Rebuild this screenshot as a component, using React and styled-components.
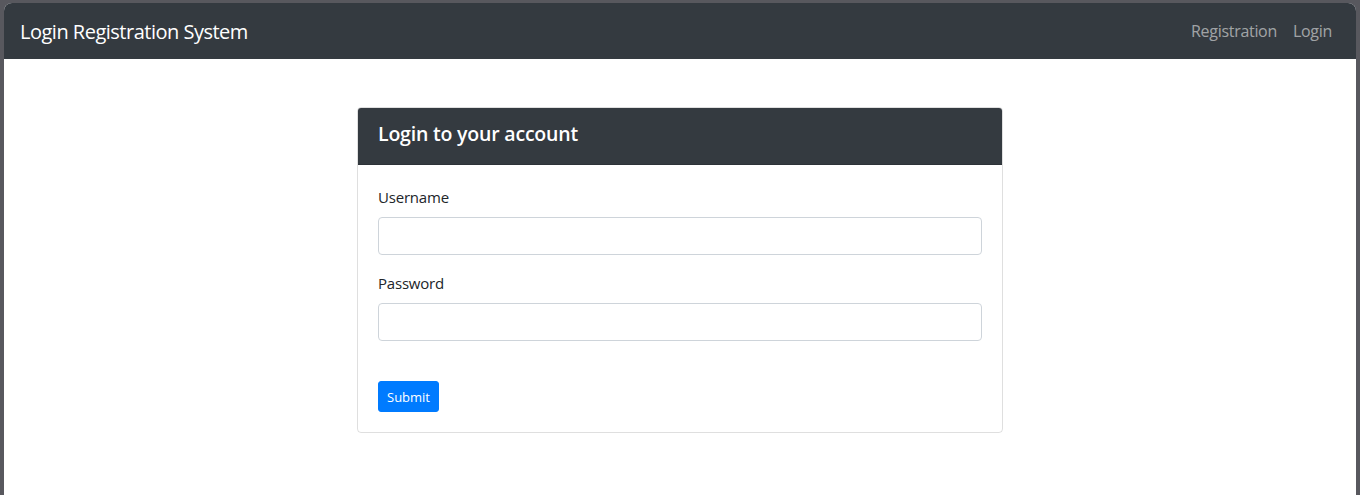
import React from 'react';
import styled, { createGlobalStyle } from 'styled-components';

const GlobalStyle = createGlobalStyle`
  html, body {
    margin: 0;
    padding: 0;
    height: 100%;
    background: #58585e;
    overflow: hidden;
  }
  #root {
    height: 100%;
  }
  * {
    box-sizing: border-box;
  }
`;

// Window frame around the page
const Frame = styled.div`
  height: 100%;
  padding: 3px 4px 0 4px;
`;

const Page = styled.div`
  height: 100%;
  background: #ffffff;
  border-radius: 8px 8px 0 0;
  overflow: hidden;
  font-family: 'Open Sans', 'Noto Sans', sans-serif;
  color: #212529;
`;

const Navbar = styled.nav`
  height: 56px;
  background-color: #343a40;
  display: flex;
  align-items: center;
  justify-content: space-between;
  padding: 0 16px;
`;

const Brand = styled.a`
  color: #ffffff;
  font-size: 20px;
  text-decoration: none;
  letter-spacing: -0.5px;
`;

const NavLinks = styled.div`
  display: flex;
`;

const NavLink = styled.a`
  color: rgba(255, 255, 255, 0.55);
  font-size: 16px;
  text-decoration: none;
  padding: 8px;
  letter-spacing: -0.3px;
`;

const Main = styled.main`
  display: flex;
  justify-content: center;
  padding-top: 48px;
`;

const Card = styled.div`
  width: 646px;
  border: 1px solid rgba(0, 0, 0, 0.125);
  border-radius: 4px;
  overflow: hidden;
`;

const CardHeader = styled.div`
  background-color: #343a40;
  color: #ffffff;
  height: 57px;
  padding: 0 20px 5px;
  display: flex;
  align-items: center;
  border-bottom: 1px solid rgba(0, 0, 0, 0.125);
`;

const CardTitle = styled.h4`
  margin: 0;
  font-size: 19.5px;
  font-weight: 600;
  letter-spacing: -0.2px;
`;

const CardBody = styled.form`
  padding: 20px;
`;

const FormGroup = styled.div`
  margin-bottom: ${(p) => (p.$last ? '40px' : '16px')};
`;

const Label = styled.label`
  display: block;
  font-size: 15px;
  line-height: 24px;
  margin-bottom: 8px;
  letter-spacing: -0.2px;
`;

const Input = styled.input`
  display: block;
  width: 100%;
  height: 38px;
  padding: 6px 12px;
  font-size: 16px;
  border: 1px solid #ced4da;
  border-radius: 4px;
  background: #fff;
`;

const Button = styled.button`
  height: 31px;
  padding: 0 8px;
  font-family: inherit;
  font-size: 13px;
  color: #ffffff;
  background-color: #007bff;
  border: 1px solid #007bff;
  border-radius: 3px;
  cursor: pointer;
`;

export default function App() {
  return (
    <>
      <GlobalStyle />
      <Frame>
        <Page>
          <Navbar>
            <Brand href="#">Login Registration System</Brand>
            <NavLinks>
              <NavLink href="#">Registration</NavLink>
              <NavLink href="#">Login</NavLink>
            </NavLinks>
          </Navbar>
          <Main>
            <Card>
              <CardHeader>
                <CardTitle>Login to your account</CardTitle>
              </CardHeader>
              <CardBody onSubmit={(e) => e.preventDefault()}>
                <FormGroup>
                  <Label>Username</Label>
                  <Input type="text" />
                </FormGroup>
                <FormGroup $last>
                  <Label>Password</Label>
                  <Input type="password" />
                </FormGroup>
                <Button type="submit">Submit</Button>
              </CardBody>
            </Card>
          </Main>
        </Page>
      </Frame>
    </>
  );
}
